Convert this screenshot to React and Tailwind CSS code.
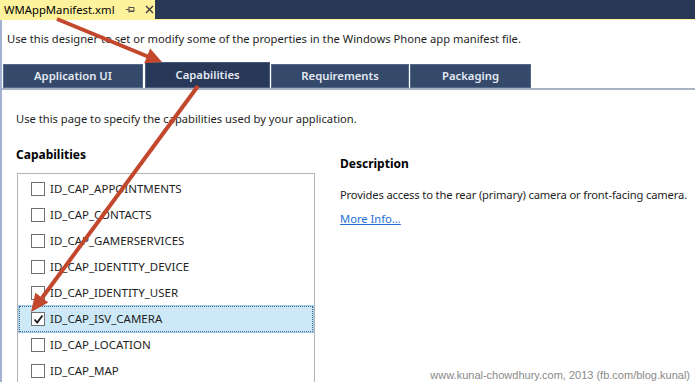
import React from "react";

const items = [
  "ID_CAP_APPOINTMENTS",
  "ID_CAP_CONTACTS",
  "ID_CAP_GAMERSERVICES",
  "ID_CAP_IDENTITY_DEVICE",
  "ID_CAP_IDENTITY_USER",
  "ID_CAP_ISV_CAMERA",
  "ID_CAP_LOCATION",
  "ID_CAP_MAP",
];

function Checkbox({ checked }) {
  return (
    <div className="w-[14px] h-[14px] border border-[#707070] bg-white flex items-center justify-center shrink-0">
      {checked && (
        <svg width="11" height="11" viewBox="0 0 11 11">
          <path d="M1.5 5.5 L4.2 8.5 L9.5 1.5" fill="none" stroke="#1a1a1a" strokeWidth="1.8" />
        </svg>
      )}
    </div>
  );
}

export default function App() {
  const font = { fontFamily: '"Noto Sans", "Open Sans", sans-serif' };
  return (
    <div
      className="relative w-[695px] h-[382px] overflow-hidden bg-white text-[11.2px] text-[#1e1e1e] flex flex-col"
      style={font}
    >
      {/* document tab bar */}
      <div className="flex h-[19px] bg-[#293955] shrink-0">
        <div className="w-[155px] bg-[#fff29d] flex items-center pl-[4px] text-black text-[11.3px]">
          <span className="leading-none">WMAppManifest.xml</span>
          <svg className="ml-[11px]" width="9" height="9" viewBox="0 0 9 9">
            <path d="M0 4.5 H3 M3 1.5 V7.5 M3 2.5 H8 V6.5 H3" fill="none" stroke="#4a4a4a" strokeWidth="1" />
            <path d="M3 6 H8" stroke="#4a4a4a" strokeWidth="1" />
          </svg>
          <svg className="ml-[10px]" width="9" height="9" viewBox="0 0 9 9">
            <path d="M1 1 L8 8 M8 1 L1 8" stroke="#3a3a3a" strokeWidth="1.4" />
          </svg>
        </div>
      </div>
      <div className="h-[1px] bg-[#fff29d] shrink-0" />

      {/* body */}
      <div className="flex-1 border-l-2 border-[#a3b0cf] flex flex-col">
        <div className="pl-[5px] pt-[11px] leading-[16px] whitespace-nowrap">
          Use this designer to set or modify some of the properties in the Windows Phone app manifest file.
        </div>

        {/* tabs */}
        <div className="mt-[15px] flex items-end h-[26px] pl-[1px] text-[#e4eaf3] text-[11.3px] font-semibold">
          <div className="w-[140px] h-[24px] bg-[#35496a] border border-[#53688a] flex items-center justify-center">
            Application UI
          </div>
          <div className="ml-[2px] w-[125px] h-[26px] bg-[#283858] border border-[#4b5d7c] flex items-center justify-center">
            Capabilities
          </div>
          <div className="ml-[1px] w-[138px] h-[24px] bg-[#35496a] border border-[#53688a] flex items-center justify-center">
            Requirements
          </div>
          <div className="ml-[1px] w-[121px] h-[24px] bg-[#35496a] border border-[#53688a] flex items-center justify-center">
            Packaging
          </div>
        </div>
        <div className="h-[2px] bg-[#aab3c4]" />

        <div className="pl-[14px] mt-[21px] leading-[16px] whitespace-nowrap">
          Use this page to specify the capabilities used by your application.
        </div>

        <div className="flex mt-[20px]">
          <div className="pl-[14px] w-[313px] shrink-0">
            <div className="font-bold text-[12px] leading-[16px] text-black">Capabilities</div>
            <div className="mt-[10px] ml-[1px] w-[298px] h-[300px] border border-[#b4b4b4] pt-[2px] px-[1px] text-[11.5px]">
              {items.map((it) => {
                const sel = it === "ID_CAP_ISV_CAMERA";
                return (
                  <div
                    key={it}
                    className={
                      sel
                        ? "h-[26px] flex items-center pl-[11px] gap-[5px] bg-[#cde8f7] border border-dotted border-[#4c6a8c] outline outline-1 outline-[#9ccbec]"
                        : "h-[26px] flex items-center pl-[12px] gap-[5px]"
                    }
                  >
                    <Checkbox checked={sel} />
                    <span className="leading-none">{it}</span>
                  </div>
                );
              })}
            </div>
          </div>

          <div className="ml-[25px] mt-[9px] whitespace-nowrap">
            <div className="font-bold text-[12px] leading-[16px] text-black">Description</div>
            <div className="mt-[15px] leading-[16px] tracking-[-0.15px]">
              Provides access to the rear (primary) camera or front-facing camera.
            </div>
            <div className="mt-[8px] leading-[16px] text-[#1f6fd6] underline">More Info...</div>
          </div>
        </div>
      </div>

      {/* watermark */}
      <div
        className="absolute right-[5px] bottom-[0px] text-[11px] leading-[14px] text-[#8a8a8a]"
        style={{ fontFamily: '"Liberation Sans", Arial, sans-serif' }}
      >
        www.kunal-chowdhury.com, 2013 (fb.com/blog.kunal)
      </div>

      {/* annotation arrows */}
      <svg className="absolute inset-0 pointer-events-none" width="695" height="382" viewBox="0 0 695 382">
        <line x1="57" y1="19" x2="149" y2="57" stroke="#c3472c" strokeWidth="4" />
        <polygon points="162,62 144.2,63.3 150.2,48.5" fill="#c3472c" />
        <line x1="198" y1="86" x2="42" y2="298" stroke="#c3472c" strokeWidth="4" />
        <polygon points="31,312 48.2,302.4 35.4,292.8" fill="#c3472c" />
      </svg>
    </div>
  );
}
